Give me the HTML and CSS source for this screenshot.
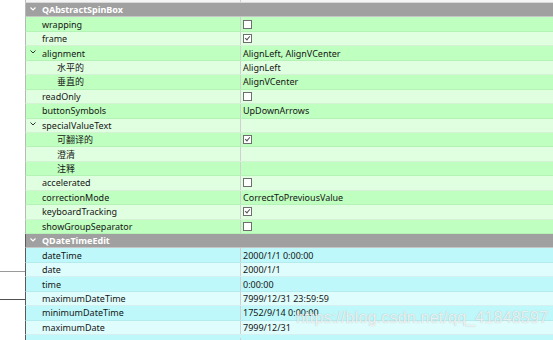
FILE: index.html
```html
<!DOCTYPE html>
<html>
<head>
<meta charset="utf-8">
<link rel="stylesheet" href="styles.css">
</head>
<body>
<div class="page">
  <div class="gutter"><div class="sidebox"></div></div>
  <div class="tree">
    <div class="row top"><div class="name"></div><div class="val"></div></div>
    <div class="row head"><div class="name"><span class="arr"><svg width="6" height="4" viewBox="0 0 6 4"><polyline points="0.5,0.5 3,3 5.5,0.5" fill="none" stroke="#fff" stroke-width="1.2"/></svg></span>QAbstractSpinBox</div><div class="val"></div></div>
    <div class="row g1"><div class="name">wrapping</div><div class="val"><span class="cb"></span></div></div>
    <div class="row g2"><div class="name">frame</div><div class="val"><span class="cb on"></span></div></div>
    <div class="row g1"><div class="name"><span class="arr"><svg width="6" height="4" viewBox="0 0 6 4"><polyline points="0.5,0.5 3,3 5.5,0.5" fill="none" stroke="#333" stroke-width="1"/></svg></span>alignment</div><div class="val">AlignLeft, AlignVCenter</div></div>
    <div class="row g2"><div class="name sub">水平的</div><div class="val">AlignLeft</div></div>
    <div class="row g1"><div class="name sub">垂直的</div><div class="val">AlignVCenter</div></div>
    <div class="row g2"><div class="name">readOnly</div><div class="val"><span class="cb"></span></div></div>
    <div class="row g1"><div class="name">buttonSymbols</div><div class="val">UpDownArrows</div></div>
    <div class="row g2"><div class="name"><span class="arr"><svg width="6" height="4" viewBox="0 0 6 4"><polyline points="0.5,0.5 3,3 5.5,0.5" fill="none" stroke="#333" stroke-width="1"/></svg></span>specialValueText</div><div class="val"></div></div>
    <div class="row g1"><div class="name sub">可翻译的</div><div class="val"><span class="cb on"></span></div></div>
    <div class="row g2"><div class="name sub">澄清</div><div class="val"></div></div>
    <div class="row g1"><div class="name sub">注释</div><div class="val"></div></div>
    <div class="row g2"><div class="name">accelerated</div><div class="val"><span class="cb"></span></div></div>
    <div class="row g1"><div class="name">correctionMode</div><div class="val">CorrectToPreviousValue</div></div>
    <div class="row g2"><div class="name">keyboardTracking</div><div class="val"><span class="cb on"></span></div></div>
    <div class="row g1"><div class="name">showGroupSeparator</div><div class="val"><span class="cb"></span></div></div>
    <div class="row head dark"><div class="name"><span class="arr"><svg width="6" height="4" viewBox="0 0 6 4"><polyline points="0.5,0.5 3,3 5.5,0.5" fill="none" stroke="#fff" stroke-width="1.2"/></svg></span>QDateTimeEdit</div><div class="val"></div></div>
    <div class="row c1"><div class="name">dateTime</div><div class="val">2000/1/1 0:00:00</div></div>
    <div class="row c2"><div class="name">date</div><div class="val">2000/1/1</div></div>
    <div class="row c1"><div class="name">time</div><div class="val">0:00:00</div></div>
    <div class="row c2"><div class="name">maximumDateTime</div><div class="val">7999/12/31 23:59:59</div></div>
    <div class="row c1"><div class="name">minimumDateTime</div><div class="val">1752/9/14 0:00:00</div></div>
    <div class="row c2"><div class="name">maximumDate</div><div class="val">7999/12/31</div></div>
    <div class="row c1 last"><div class="name">minimumDate</div><div class="val">1752/9/14</div></div>
  </div>
  <div class="watermark">https://blog.csdn.net/qq_41848597</div>
</div>
</body>
</html>
```
FILE: styles.css
```css
html, body {
  margin: 0;
  padding: 0;
  background: #fff;
  overflow: hidden;
}
.page {
  position: relative;
  display: flex;
  width: 553px;
  height: 340px;
  overflow: hidden;
  font-family: "Noto Sans", "Noto Sans CJK SC", sans-serif;
  font-size: 9px;
  color: #161616;
}
.gutter {
  width: 25px;
  flex: none;
  padding-top: 271px;
  box-sizing: border-box;
}
.sidebox {
  height: 29px;
  border-top: 1px solid #9a9a9a;
  border-bottom: 1px solid #505050;
  box-sizing: border-box;
}
.tree {
  flex: 1;
  display: flex;
  flex-direction: column;
}
.row {
  display: grid;
  grid-template-columns: 215px 1fr;
  height: 14.44px;
  flex: none;
  box-sizing: border-box;
  border-left: 1px solid #b8b8b8;
  border-bottom: 1px solid rgba(0,0,0,0.05);
  align-items: center;
  line-height: 13px;
}
.row.top {
  height: 3px;
  background: #f4f4f4;
  border-bottom: 1px solid #d8d8d8;
  align-items: stretch;
}
.row.head {
  background: #a0a0a0;
  color: #fff;
  font-weight: bold;
  border-bottom: 1px solid #c6c6c6;
}
.row.head.dark,
.row.c1,
.row.c2 { border-left-color: #5a5a5a; }
.row.head .name { border-right: none; }
.row.last { padding-top: 3px; }
.g1 { background: #bfffbf; }
.g2 { background: #e0ffe0; }
.c1 { background: #bff8fa; }
.c2 { background: #e0fdfd; }
.name {
  height: 100%;
  display: flex;
  align-items: center;
  padding-left: 16px;
  border-right: 1px solid #d0d0d0;
  box-sizing: border-box;
  position: relative;
  white-space: nowrap;
}
.name.sub { padding-left: 31px; }
.arr {
  position: absolute;
  left: 4px;
  top: 50%;
  margin-top: -3px;
  display: flex;
}
.val {
  padding-left: 2px;
  white-space: nowrap;
  display: flex;
  align-items: center;
  height: 100%;
}
.cb {
  width: 9px;
  height: 9px;
  box-sizing: border-box;
  border: 1px solid #6e6e6e;
  background: #fff;
  position: relative;
}
.cb.on::after {
  content: "";
  position: absolute;
  left: 2px;
  top: 0px;
  width: 2px;
  height: 4px;
  border-right: 1px solid #555;
  border-bottom: 1px solid #555;
  transform: rotate(40deg);
}
.watermark {
  position: absolute;
  left: 296px;
  top: 309px;
  font-family: "Liberation Sans", Arial, sans-serif;
  font-size: 16px;
  color: rgba(255,255,255,0.8);
  text-shadow: 0 0 1px rgba(120,120,120,0.55);
  letter-spacing: 0.2px;
  white-space: nowrap;
}
```
